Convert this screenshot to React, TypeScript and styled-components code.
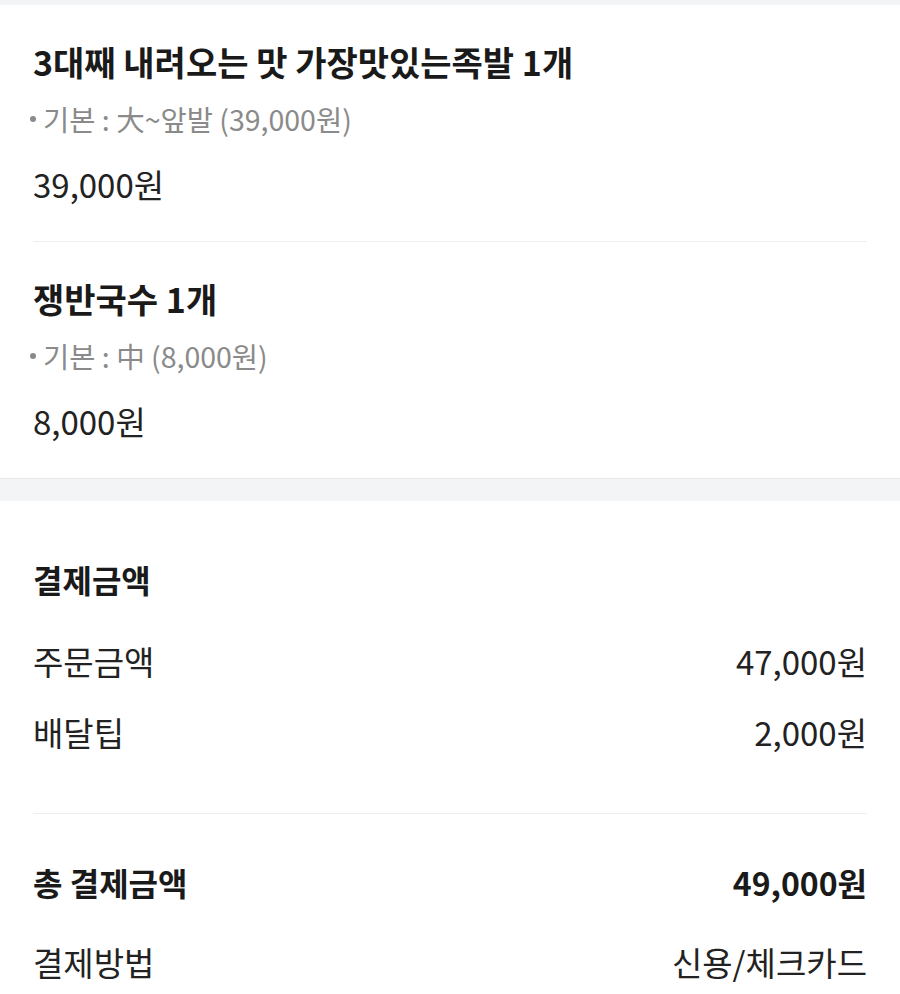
import React from 'react';
import styled, { createGlobalStyle } from 'styled-components';

const GlobalStyle = createGlobalStyle`
    body {
        margin: 0;
        background: #f3f4f6;
        font-family: 'Noto Sans CJK KR', 'Noto Sans', sans-serif;
        color: #222;
    }
`;

const Page = styled.div`
    width: 900px;
    padding-top: 5px;
    background: #f3f4f6;
`;
const Section = styled.section<{ $gap?: number }>`
    background: #fff;
    padding: 0 33px 0 33px;
    margin-bottom: ${(p) => p.$gap ?? 0}px;
    border-bottom: 1px solid #e8e8ea;
`;
const MenuItem = styled.div`
    padding: 35px 0 35px;
    & + & {
        border-top: 1px solid #eeeeee;
    }
`;
const MenuName = styled.h3`
    margin: 0;
    font-size: 34px;
    font-weight: 700;
    line-height: 44px;
    color: #1a1a1a;
`;
const MenuOption = styled.div`
    margin-top: 15px;
    font-size: 28.5px;
    line-height: 40px;
    color: #8a8a8a;
    display: flex;
    align-items: center;
`;
const Dot = styled.span`
    width: 6px;
    height: 6px;
    border-radius: 50%;
    background: #8a8a8a;
    margin: 0 7px 0 -3px;
`;
const MenuPrice = styled.div`
    margin-top: 23px;
    font-size: 33px;
    line-height: 44px;
    color: #222;
`;
const Block = styled.div<{ $top: number; $bottom: number }>`
    padding: ${(p) => p.$top}px 0 ${(p) => p.$bottom}px;
    & + & {
        border-top: 1px solid #eeeeee;
    }
`;
const Heading = styled.h3`
    margin: 0 0 38px;
    font-size: 32px;
    font-weight: 700;
    line-height: 44px;
    color: #1a1a1a;
`;
const Row = styled.div<{ $bold?: boolean }>`
    display: flex;
    justify-content: space-between;
    align-items: center;
    font-size: ${(p) => (p.$bold ? 32 : 33)}px;
    line-height: 44px;
    font-weight: ${(p) => (p.$bold ? 700 : 400)};
    color: ${(p) => (p.$bold ? '#1a1a1a' : '#222')};
`;
const RowList = styled.div<{ $gap: number }>`
    display: flex;
    flex-direction: column;
    gap: ${(p) => p.$gap}px;
`;

const items = [
    { name: '3대째 내려오는 맛 가장맛있는족발 1개', option: '기본 : 大~앞발 (39,000원)', price: '39,000원' },
    { name: '쟁반국수 1개', option: '기본 : 中 (8,000원)', price: '8,000원' },
];

function App() {
    return (
        <Page>
            <GlobalStyle />
            <Section $gap={22}>
                {items.map((item) => (
                    <MenuItem key={item.name}>
                        <MenuName>{item.name}</MenuName>
                        <MenuOption>
                            <Dot />
                            {item.option}
                        </MenuOption>
                        <MenuPrice>{item.price}</MenuPrice>
                    </MenuItem>
                ))}
            </Section>
            <Section>
                <Block $top={56} $bottom={59}>
                    <Heading>결제금액</Heading>
                    <RowList $gap={27}>
                        <Row>
                            <span>주문금액</span>
                            <span>47,000원</span>
                        </Row>
                        <Row>
                            <span>배달팁</span>
                            <span>2,000원</span>
                        </Row>
                    </RowList>
                </Block>
                <Block $top={46} $bottom={40}>
                    <RowList $gap={36}>
                        <Row $bold>
                            <span>총 결제금액</span>
                            <span>49,000원</span>
                        </Row>
                        <Row>
                            <span>결제방법</span>
                            <span>신용/체크카드</span>
                        </Row>
                    </RowList>
                </Block>
            </Section>
        </Page>
    );
}

export default App;
